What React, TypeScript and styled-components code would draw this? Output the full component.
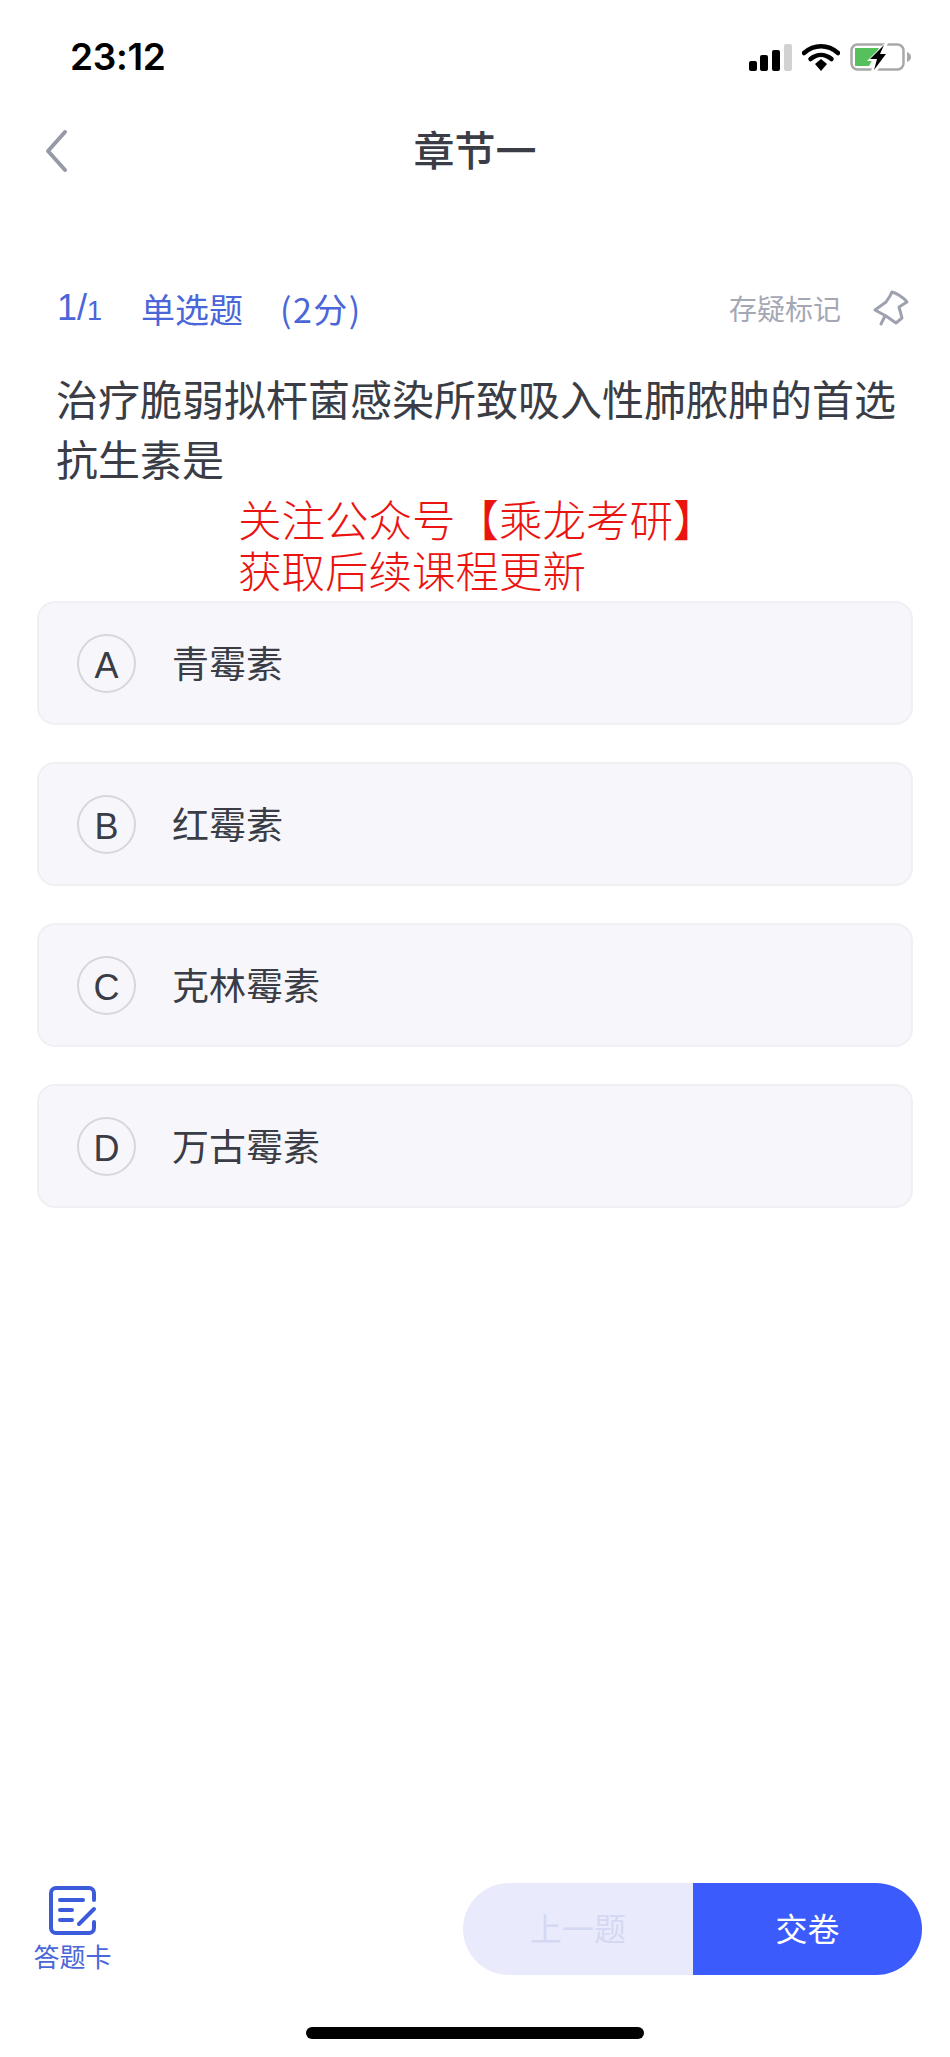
import React from "react"
import styled, { createGlobalStyle } from "styled-components"

const GlobalStyle = createGlobalStyle`
  html, body {
    margin: 0;
    padding: 0;
    background: #fff;
  }
  body {
    font-family: "Noto Sans CJK SC", "Noto Sans", sans-serif;
  }
`

const Page = styled.div`
  width: 950px;
  height: 2057px;
  display: flex;
  flex-direction: column;
  overflow: hidden;
  color: #3a3d45;
`

const StatusBar = styled.div`
  height: 112px;
  box-sizing: border-box;
  padding: 41px 38px 0 70px;
  display: flex;
  justify-content: space-between;
  align-items: flex-start;
`

const Clock = styled.span`
  font-family: Inter, sans-serif;
  font-size: 37px;
  line-height: 32px;
  font-weight: 600;
  letter-spacing: -0.3px;
  color: #000;
`

const StatusIcons = styled.div`
  display: flex;
  align-items: center;
  gap: 10px;
  margin-top: 2px;
`

const NavBar = styled.div`
  height: 72px;
  padding: 0 44px;
  display: flex;
  align-items: center;
  position: relative;

  svg {
    margin-top: 6px;
  }
`

const NavTitle = styled.h1`
  position: absolute;
  left: 0;
  right: 0;
  margin: 0;
  text-align: center;
  font-size: 41px;
  line-height: 72px;
  font-weight: 500;
`

const MetaRow = styled.div`
  margin-top: 100px;
  padding: 0 40px 0 57px;
  height: 48px;
  display: flex;
  align-items: center;
  color: #4a66d8;
  font-size: 34px;
`

const Counter = styled.span`
  font-family: "Liberation Sans", sans-serif;
  font-size: 36px;
  width: 84px;

  small {
    font-size: 27px;
  }
`

const Score = styled.span`
  margin-left: 37px;
  letter-spacing: 1.5px;
`

const MarkLabel = styled.span`
  margin-left: auto;
  margin-right: 31px;
  font-size: 28px;
  color: #a4a8b4;
`

const Question = styled.p`
  margin: 36px 40px 0 56px;
  font-size: 42px;
  line-height: 60px;
`

const Notice = styled.div`
  margin: 9px 0 0 238px;
  color: #ea1410;
  font-family: "Liberation Serif", "Noto Sans CJK SC", serif;
  font-size: 43.5px;
  line-height: 51px;
  font-weight: 300;
`

const OptionList = styled.div`
  margin: 2px 37px 0;
  display: flex;
  flex-direction: column;
  gap: 37px;
`

const OptionCard = styled.div`
  height: 124px;
  box-sizing: border-box;
  padding-left: 38px;
  display: flex;
  align-items: center;
  gap: 36px;
  background: #f7f7fb;
  border: 2px solid #f0f0f4;
  border-radius: 18px;
`

const OptionLetter = styled.span`
  width: 59px;
  height: 59px;
  box-sizing: border-box;
  padding-top: 5px;
  display: flex;
  align-items: center;
  justify-content: center;
  border: 2px solid #d6d7dc;
  border-radius: 50%;
  font-family: "Liberation Sans", sans-serif;
  font-size: 36px;
`

const OptionText = styled.span`
  font-size: 37px;
  margin-bottom: 2px;
`

const Footer = styled.div`
  margin-top: auto;
  padding: 0 28px 0 34px;
  display: flex;
  justify-content: space-between;
  align-items: flex-start;
`

const CardLink = styled.div`
  width: 77px;
  padding-top: 2px;
  display: flex;
  flex-direction: column;
  align-items: center;
  color: #4a66d8;
  font-size: 26px;
  line-height: 38px;
  white-space: nowrap;
`

const ButtonGroup = styled.div`
  width: 459px;
  height: 92px;
  display: flex;
  border-radius: 46px;
  overflow: hidden;
`

const FooterButton = styled.div<{ $primary?: boolean }>`
  flex: ${(p) => (p.$primary ? "0 0 229px" : "1")};
  padding-bottom: 4px;
  display: flex;
  align-items: center;
  justify-content: center;
  font-size: 32px;
  background: ${(p) => (p.$primary ? "#3b5bfd" : "#e9ebfd")};
  color: ${(p) => (p.$primary ? "#fff" : "#d5d8f2")};
`

const HomeBar = styled.div`
  width: 338px;
  height: 12px;
  margin: 52px auto 18px 306px;
  background: #000;
  border-radius: 6px;
`

const BackIcon = () => (
  <svg width="24" height="44" viewBox="0 0 24 44" fill="none">
    <path d="M21 3 L4 22 L21 41" stroke="#959aa6" strokeWidth="4" strokeLinecap="round" strokeLinejoin="round" />
  </svg>
)

const SignalIcon = () => (
  <svg width="43" height="27" viewBox="0 0 43 27">
    <rect x="0" y="17" width="8" height="10" rx="2" fill="#000" />
    <rect x="11" y="11" width="8" height="16" rx="2" fill="#000" />
    <rect x="23" y="6" width="8" height="21" rx="2" fill="#000" />
    <rect x="35" y="0" width="8" height="27" rx="2" fill="#d2d2d2" />
  </svg>
)

const WifiIcon = () => (
  <svg width="38" height="27" viewBox="0 0 38 27" fill="none">
    <path d="M2 9 C12 0 26 0 36 9" stroke="#000" strokeWidth="4.5" strokeLinecap="round" />
    <path d="M8.5 15 C15 9.5 23 9.5 29.5 15" stroke="#000" strokeWidth="4.5" strokeLinecap="round" />
    <path d="M13 20 L19 15 L25 20 L19 27 Z" fill="#000" />
  </svg>
)

const BatteryIcon = () => (
  <svg width="62" height="28" viewBox="0 0 62 28" fill="none">
    <rect x="1.5" y="1.5" width="52" height="25" rx="6" stroke="#a9a9a9" strokeWidth="2.5" />
    <path d="M5 5 H29 L19 23 H5 Z" fill="#55c05c" />
    <path d="M35 0 L17 18 H24 L21 28 L27 28 L39 13 H33 L38 0 Z" fill="#fff" />
    <path d="M34 2 L20 16 H27 L24 27 L36 11 H30 Z" fill="#000" />
    <path d="M57 9 C60 10 61 12 61 14 C61 16 60 18 57 19 Z" fill="#a9a9a9" />
  </svg>
)

const PinIcon = () => (
  <svg width="38" height="38" viewBox="0 0 38 38" fill="none">
    <path
      d="M20 3 C24 4 31 8 35 13 L27 18 L30 29 L24 34 L14 27 L3 21 L14 13 L18 7 Z M13 27 L9 35"
      stroke="#9ea2ae"
      strokeWidth="3"
      strokeLinecap="round"
      strokeLinejoin="round"
    />
  </svg>
)

const AnswerCardIcon = () => (
  <svg width="50" height="52" viewBox="0 0 50 52" fill="none">
    <path
      d="M46 15 V8 a5 5 0 0 0 -5 -5 H8 a5 5 0 0 0 -5 5 V43 a5 5 0 0 0 5 5 H41 a5 5 0 0 0 5 -5 V37"
      stroke="#3b5bdb"
      strokeWidth="4"
      strokeLinecap="round"
    />
    <path d="M12 15 H35 M12 25 H24 M12 35 H24 M31 39 L46 24" stroke="#3b5bdb" strokeWidth="4" strokeLinecap="round" />
  </svg>
)

const options = [
  { letter: "A", text: "青霉素" },
  { letter: "B", text: "红霉素" },
  { letter: "C", text: "克林霉素" },
  { letter: "D", text: "万古霉素" },
]

const App: React.FC = () => {
  return (
    <Page>
      <GlobalStyle />
      <StatusBar>
        <Clock>23:12</Clock>
        <StatusIcons>
          <SignalIcon />
          <WifiIcon />
          <BatteryIcon />
        </StatusIcons>
      </StatusBar>
      <NavBar>
        <BackIcon />
        <NavTitle>章节一</NavTitle>
      </NavBar>
      <MetaRow>
        <Counter>
          1/<small>1</small>
        </Counter>
        <span>单选题</span>
        <Score>(2分)</Score>
        <MarkLabel>存疑标记</MarkLabel>
        <PinIcon />
      </MetaRow>
      <Question>治疗脆弱拟杆菌感染所致吸入性肺脓肿的首选抗生素是</Question>
      <Notice>
        关注公众号【乘龙考研】
        <br />
        获取后续课程更新
      </Notice>
      <OptionList>
        {options.map((o) => (
          <OptionCard key={o.letter}>
            <OptionLetter>{o.letter}</OptionLetter>
            <OptionText>{o.text}</OptionText>
          </OptionCard>
        ))}
      </OptionList>
      <Footer>
        <CardLink>
          <AnswerCardIcon />
          答题卡
        </CardLink>
        <ButtonGroup>
          <FooterButton>上一题</FooterButton>
          <FooterButton $primary>交卷</FooterButton>
        </ButtonGroup>
      </Footer>
      <HomeBar />
    </Page>
  )
}

export default App
